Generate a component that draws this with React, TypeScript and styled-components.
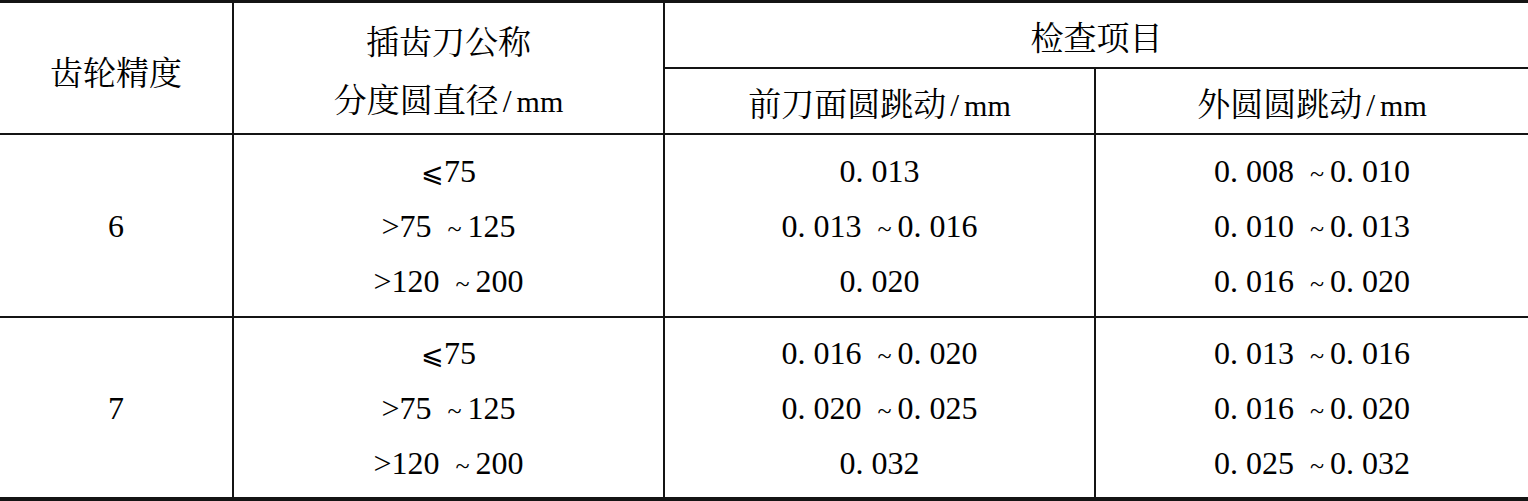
import React from "react";
import styled, { createGlobalStyle } from "styled-components";

const GlobalStyle = createGlobalStyle`
  html, body {
    margin: 0;
    padding: 0;
    background: #ffffff;
  }
  body {
    font-family: "Liberation Serif", "Times New Roman", "Noto Serif CJK SC", serif;
    color: #000;
  }
`;

const Table = styled.div`
  display: grid;
  width: 1528px;
  height: 501px;
  box-sizing: border-box;
  grid-template-columns: 232px 429px 429px 432px;
  grid-template-rows: 64px 64px 181px 179px;
  column-gap: 2px;
  row-gap: 2px;
  padding: 3px 0 4px;
  background: #141414;
`;

const Cell = styled.div<{ $col: number; $row: number; $colSpan?: number; $rowSpan?: number; $shift?: number }>`
  grid-column: ${(p) => p.$col} / span ${(p) => p.$colSpan ?? 1};
  grid-row: ${(p) => p.$row} / span ${(p) => p.$rowSpan ?? 1};
  background: #ffffff;
  display: flex;
  flex-direction: column;
  align-items: center;
  justify-content: center;
  box-sizing: border-box;
  padding-top: ${(p) => p.$shift ?? 0}px;
`;

const HeadLine = styled.div<{ $h?: number }>`
  height: ${(p) => p.$h ?? 58}px;
  line-height: ${(p) => p.$h ?? 58}px;
  white-space: nowrap;
`;

const Han = styled.span`
  font-family: "Noto Serif CJK SC", "Noto Sans CJK SC", serif;
  font-size: 33px;
  font-weight: 400;
`;

const Unit = styled.span`
  font-family: "Liberation Serif", "Times New Roman", serif;
  font-size: 30px;
`;

const Slash = styled.span`
  display: inline-block;
  margin: 0 5px 0 4px;
  font-size: 32px;
`;

const DataLine = styled.div`
  height: 55px;
  line-height: 55px;
  white-space: nowrap;
  font-family: "Liberation Serif", "Times New Roman", serif;
  font-size: 32px;
`;

const Tilde = styled.span`
  display: inline-block;
  margin: 0 6px 0 8px;
  font-size: 26px;
`;

const LessEq = styled.span`
  font-family: "DejaVu Serif", serif;
  font-weight: 300;
  font-size: 27px;
`;

type Range = [string, string?];

const Value: React.FC<{ v: Range }> = ({ v }) => {
  const first = v[0].startsWith("⩽") ? (
    <>
      <LessEq>⩽</LessEq>
      {v[0].slice(1)}
    </>
  ) : (
    v[0]
  );
  return (
    <DataLine>
      {first}
      {v[1] !== undefined && (
        <>
          {" "}
          <Tilde>~</Tilde>
          {v[1]}
        </>
      )}
    </DataLine>
  );
};

const HeadText: React.FC<{ han: string; unit?: boolean }> = ({ han, unit }) => (
  <>
    <Han>{han}</Han>
    {unit && (
      <Unit>
        <Slash>/</Slash>mm
      </Unit>
    )}
  </>
);

const groups: {
  grade: string;
  dia: Range[];
  front: Range[];
  outer: Range[];
}[] = [
  {
    grade: "6",
    dia: [["⩽75"], [">75", "125"], [">120", "200"]],
    front: [["0. 013"], ["0. 013", "0. 016"], ["0. 020"]],
    outer: [["0. 008", "0. 010"], ["0. 010", "0. 013"], ["0. 016", "0. 020"]],
  },
  {
    grade: "7",
    dia: [["⩽75"], [">75", "125"], [">120", "200"]],
    front: [["0. 016", "0. 020"], ["0. 020", "0. 025"], ["0. 032"]],
    outer: [["0. 013", "0. 016"], ["0. 016", "0. 020"], ["0. 025", "0. 032"]],
  },
];

export default function App() {
  return (
    <>
      <GlobalStyle />
      <Table>
        <Cell $col={1} $row={1} $rowSpan={2} $shift={5}>
          <HeadLine>
            <HeadText han="齿轮精度" />
          </HeadLine>
        </Cell>
        <Cell $col={2} $row={1} $rowSpan={2} $shift={2}>
          <HeadLine>
            <HeadText han="插齿刀公称" />
          </HeadLine>
          <HeadLine>
            <HeadText han="分度圆直径" unit />
          </HeadLine>
        </Cell>
        <Cell $col={3} $row={1} $colSpan={2} $shift={1}>
          <HeadLine>
            <HeadText han="检查项目" />
          </HeadLine>
        </Cell>
        <Cell $col={3} $row={2} $shift={1}>
          <HeadLine>
            <HeadText han="前刀面圆跳动" unit />
          </HeadLine>
        </Cell>
        <Cell $col={4} $row={2} $shift={1}>
          <HeadLine>
            <HeadText han="外圆圆跳动" unit />
          </HeadLine>
        </Cell>
        {groups.map((g, i) => (
          <React.Fragment key={g.grade}>
            <Cell $col={1} $row={3 + i} $shift={2}>
              <DataLine>{g.grade}</DataLine>
            </Cell>
            <Cell $col={2} $row={3 + i} $shift={2}>
              {g.dia.map((v, j) => (
                <Value key={j} v={v} />
              ))}
            </Cell>
            <Cell $col={3} $row={3 + i} $shift={2}>
              {g.front.map((v, j) => (
                <Value key={j} v={v} />
              ))}
            </Cell>
            <Cell $col={4} $row={3 + i} $shift={2}>
              {g.outer.map((v, j) => (
                <Value key={j} v={v} />
              ))}
            </Cell>
          </React.Fragment>
        ))}
      </Table>
    </>
  );
}
